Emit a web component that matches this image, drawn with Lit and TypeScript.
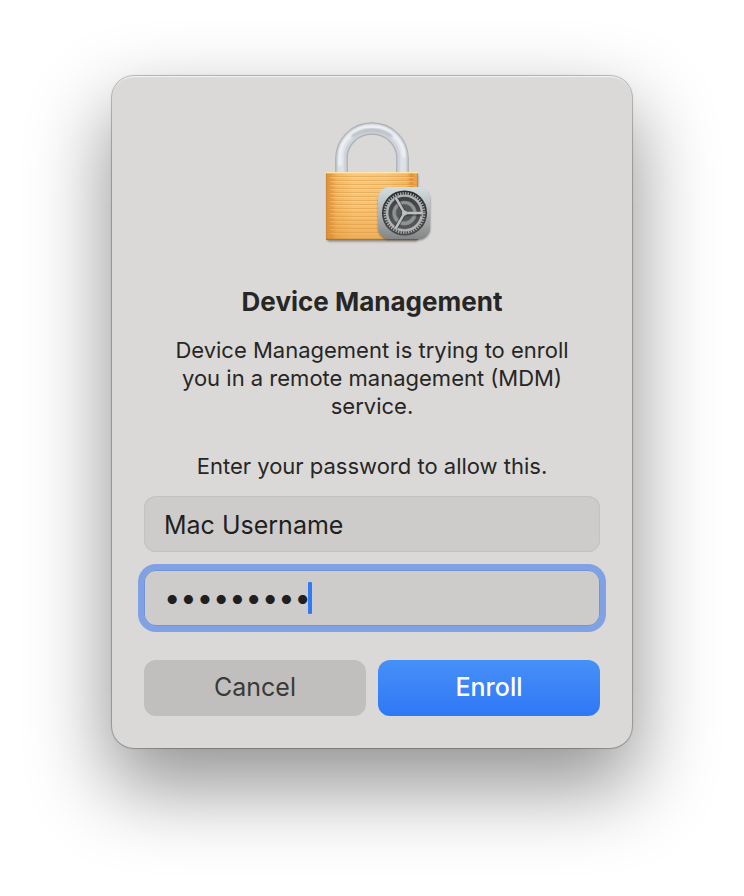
import { LitElement, html, css, svg } from "lit";
import { customElement, state } from "lit/decorators.js";

@customElement("lock-icon")
class LockIcon extends LitElement {
  static styles = css`
    :host {
      display: block;
    }
    .art {
      display: block;
      width: 120px;
      height: 128px;
    }
  `;

  render() {
    const ridges = Array.from({ length: 15 }, (_, i) => 66 + i * 4);
    return html`
      <svg class="art" viewBox="2 8 120 128" aria-hidden="true">
        <defs>
          <linearGradient id="brass" x1="0" x2="1" y1="0" y2="0">
            <stop offset="0" stop-color="#c98335" />
            <stop offset="0.02" stop-color="#e09a48" />
            <stop offset="0.05" stop-color="#e39a42" />
            <stop offset="0.12" stop-color="#f3b863" />
            <stop offset="0.3" stop-color="#f9c87b" />
            <stop offset="0.65" stop-color="#f8c679" />
            <stop offset="0.88" stop-color="#f2b55f" />
            <stop offset="0.93" stop-color="#dd9239" />
            <stop offset="0.98" stop-color="#f0ac53" />
            <stop offset="1" stop-color="#c57b2b" />
          </linearGradient>
          <linearGradient id="shade" x1="0" x2="0" y1="0" y2="1">
            <stop offset="0" stop-color="#d98a28" stop-opacity="0" />
            <stop offset="0.5" stop-color="#d98a28" stop-opacity="0.08" />
            <stop offset="1" stop-color="#d98a28" stop-opacity="0.4" />
          </linearGradient>
          <linearGradient id="badge" x1="0" x2="0" y1="0" y2="1">
            <stop offset="0" stop-color="#d3dde0" />
            <stop offset="0.5" stop-color="#b0b4b6" />
            <stop offset="1" stop-color="#858585" />
          </linearGradient>
          <linearGradient id="dial" x1="0" x2="0" y1="0" y2="1">
            <stop offset="0" stop-color="#2b2e2f" />
            <stop offset="1" stop-color="#4b4b4b" />
          </linearGradient>
          <linearGradient id="well" x1="0" x2="0" y1="0" y2="1">
            <stop offset="0" stop-color="#4c4f50" />
            <stop offset="1" stop-color="#8c8c8c" />
          </linearGradient>
          <filter id="soft" x="-20%" y="-20%" width="140%" height="150%">
            <feGaussianBlur stdDeviation="1" />
          </filter>
        </defs>

        <g fill="none">
          <path d="M31.500 63V48a30.500 29.500 0 0 1 61 0v15" stroke="#a3a8af" stroke-width="12.500" />
          <path d="M31.500 63V48a30.500 29.500 0 0 1 61 0v15" stroke="#bec3ca" stroke-width="11.200" />
          <path d="M31.500 63V48a30.500 29.500 0 0 1 61 0v15" stroke="#d0d4da" stroke-width="9" />
          <path d="M31 63V47.500a31 29.500 0 0 1 62 0V63" stroke="#dde1e6" stroke-width="5.500" />
          <path d="M30 56V47a32 30.500 0 0 1 64 0" stroke="#f3f5f8" stroke-width="2.600" filter="url(#soft)" />
          <path d="M42 26.500c11-9 29-9 40 0" stroke="#7f858d" stroke-width="2.600" opacity="0.45" filter="url(#soft)" />
        </g>

        <rect x="17" y="64" width="91" height="67.500" rx="2" fill="#4a3a28" opacity="0.55" filter="url(#soft)" />
        <rect x="16" y="62" width="92" height="68" rx="1.500" fill="url(#brass)" />
        <g>
          ${ridges.map((y) => svg`
            <rect x="17" y=${y} width="90" height="1" fill="#d98f3c" opacity="0.4" />
            <rect x="20" y=${y + 1} width="84" height="1" fill="#ffe0a0" opacity="0.4" />`)}
        </g>
        <rect x="16" y="62" width="92" height="68" rx="1.500" fill="url(#shade)" />
        <rect x="16" y="62" width="92" height="1.300" fill="#ffe7ac" />
        <rect x="16" y="128.800" width="92" height="1.200" fill="#b0732c" />

        <rect x="68.500" y="79" width="51.500" height="51" rx="11.500" fill="#333" opacity="0.6" filter="url(#soft)" />
        <rect x="68" y="77" width="52" height="52" rx="11.500" fill="url(#badge)" />
        <circle cx="94.500" cy="103" r="22.600" fill="url(#dial)" />
        <circle cx="94.500" cy="103" r="19.600" fill="none" stroke="#a9adae" stroke-width="2.600" stroke-dasharray="1.300 1.265" />
        <circle cx="94.500" cy="103" r="17.400" fill="url(#well)" stroke="#b0b4b5" stroke-width="2.400" />
        <circle cx="94.500" cy="103" r="14.200" fill="none" stroke="#343738" stroke-width="3.400" opacity="0.6" />
        <circle cx="94.500" cy="103" r="10.400" fill="none" stroke="#8f9394" stroke-width="3" />
        <circle cx="94.500" cy="103" r="8" fill="#55585a" />
        <g stroke="#2d2f30" stroke-width="4.500" opacity="0.5">
          <path d="M94.500 104H112M94.500 103l-8.800-15.300M94.500 103l-8.800 15.300" />
        </g>
        <g stroke="#bcc0c1" stroke-width="2.500">
          <path d="M94.500 103H112M94.500 103l-8.800-15.300M94.500 103l-8.800 15.300" />
        </g>
        <circle cx="94.500" cy="103" r="2.500" fill="#bcc0c1" />
      </svg>
    `;
  }
}

@customElement("app-root")
class AppRoot extends LitElement {
  @state() username = "Mac Username";
  @state() password = "macsecret";

  static styles = css`
    :host {
      display: block;
      font-family: Inter, "Liberation Sans", sans-serif;
      color: #272625;
      background: #fff;
    }
    .desktop {
      box-sizing: border-box;
      min-height: 100vh;
      padding: 76px 24px 148px;
      display: flex;
      justify-content: center;
      align-items: flex-start;
      overflow: hidden;
    }
    .dialog {
      box-sizing: border-box;
      width: 100%;
      max-width: 520px;
      padding: 42px 32px 32px;
      display: flex;
      flex-direction: column;
      align-items: center;
      border-radius: 22px;
      background: #dad9d7;
      box-shadow:
        inset 0 2px 1px -1px #f4f4f3,
        0 0 0 1px rgba(0, 0, 0, 0.2),
        0 0 3px rgba(0, 0, 0, 0.12),
        0 36px 80px 4px rgba(0, 0, 0, 0.42);
    }
    .title {
      margin: 40px 0 0;
      font-size: 26px;
      line-height: 32px;
      font-weight: 700;
      text-align: center;
    }
    .text {
      margin: 18px 0 0;
      max-width: 420px;
      font-size: 22px;
      line-height: 28px;
      text-align: center;
    }
    .text.prompt {
      margin-top: 32px;
    }
    .form {
      width: 100%;
      margin-top: 16px;
      display: grid;
      grid-template-columns: 1fr 1fr;
      column-gap: 12px;
    }
    .field {
      grid-column: 1 / -1;
      box-sizing: border-box;
      height: 56px;
      padding: 0 20px;
      display: flex;
      align-items: center;
      border-radius: 12px;
      background: #cdccca;
      box-shadow: inset 0 0 0 1px #c3c2c0;
      cursor: text;
    }
    .field.focused {
      margin-top: 18px;
      box-shadow: inset 0 0 0 1px #7294da, 0 0 0 6px #80a1e4;
    }
    .input {
      min-width: 0;
      padding: 2px 0 0;
      border: 0;
      outline: 0;
      background: none;
      color: #1f1f1f;
      font: inherit;
      font-size: 25px;
      line-height: 32px;
      flex: 1;
    }
    .input.secret {
      flex: none;
      padding: 0;
      font-size: 29px;
      field-sizing: content;
      max-width: 100%;
      caret-color: transparent;
    }
    .caret {
      width: 4px;
      height: 32px;
      margin-left: -3px;
      border-radius: 1px;
      background: #2f7bf6;
    }
    .button {
      height: 56px;
      margin-top: 34px;
      padding: 0 0 2px;
      border: 0;
      border-radius: 12px;
      background: #c0bfbd;
      color: #3a3a39;
      font: inherit;
      font-size: 25px;
      line-height: 32px;
    }
    .button.primary {
      background: linear-gradient(#4690f8, #2f78f6);
      color: #fff;
      font-weight: 500;
    }
  `;

  render() {
    return html`
      <main class="desktop">
        <section class="dialog" role="dialog" aria-labelledby="title">
          <lock-icon></lock-icon>
          <h1 class="title" id="title">Device Management</h1>
          <p class="text">
            Device Management is trying to enroll you in a remote management
            (MDM) service.
          </p>
          <p class="text prompt">Enter your password to allow this.</p>
          <form class="form" @submit=${(e: Event) => e.preventDefault()}>
            <label class="field">
              <input class="input" type="text" aria-label="Username" .value=${this.username} />
            </label>
            <label class="field focused">
              <input class="input secret" type="password" aria-label="Password" .value=${this.password} />
              <span class="caret"></span>
            </label>
            <button class="button" type="button">Cancel</button>
            <button class="button primary" type="submit">Enroll</button>
          </form>
        </section>
      </main>
    `;
  }
}
